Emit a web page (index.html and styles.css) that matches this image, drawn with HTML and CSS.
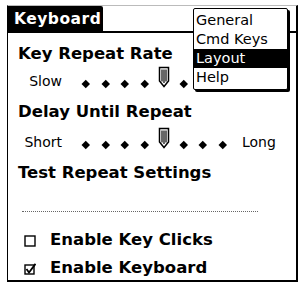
FILE: index.html
```html
<!DOCTYPE html>
<html>
<head>
<meta charset="utf-8">
<link rel="stylesheet" href="styles.css">
</head>
<body>
<div class="frame">
  <div class="titlebar">
    <div class="tab">Keyboard</div>
    <div class="rule"></div>
  </div>
  <div class="content">
    <div class="heading h1">Key Repeat Rate</div>
    <div class="slider s1">
      <span class="lbl">Slow</span>
      <div class="track">
        <span class="slot"><i class="dot"></i></span>
        <span class="slot"><i class="dot"></i></span>
        <span class="slot"><i class="dot"></i></span>
        <span class="slot"><i class="dot"></i></span>
        <span class="slot thumbslot"><svg class="thumb" width="12" height="22" viewBox="0 0 12 22"><path d="M1.5 1.5H10.5V15L6 20.5L1.5 15Z" fill="#fff" stroke="#000" stroke-width="1.5"/><path d="M4 3.5V15.5M6 3.5V17M8 3.5V15.5" stroke="#000" stroke-width="1.2"/></svg></span>
        <span class="slot"><i class="dot"></i></span>
        <span class="slot"><i class="dot"></i></span>
        <span class="slot"><i class="dot"></i></span>
      </div>
      <span class="lbl end">Fast</span>
    </div>
    <div class="heading h2">Delay Until Repeat</div>
    <div class="slider s2">
      <span class="lbl">Short</span>
      <div class="track">
        <span class="slot"><i class="dot"></i></span>
        <span class="slot"><i class="dot"></i></span>
        <span class="slot"><i class="dot"></i></span>
        <span class="slot"><i class="dot"></i></span>
        <span class="slot thumbslot"><svg class="thumb" width="12" height="22" viewBox="0 0 12 22"><path d="M1.5 1.5H10.5V15L6 20.5L1.5 15Z" fill="#fff" stroke="#000" stroke-width="1.5"/><path d="M4 3.5V15.5M6 3.5V17M8 3.5V15.5" stroke="#000" stroke-width="1.2"/></svg></span>
        <span class="slot"><i class="dot"></i></span>
        <span class="slot"><i class="dot"></i></span>
        <span class="slot"><i class="dot"></i></span>
      </div>
      <span class="lbl end">Long</span>
    </div>
    <div class="heading h3">Test Repeat Settings</div>
    <div class="dots"></div>
    <div class="check c1">
      <svg class="box" width="12" height="12" viewBox="0 0 12 12"><rect x="1" y="1" width="10" height="10" fill="none" stroke="#000" stroke-width="1.4"/></svg>
      <span>Enable Key Clicks</span>
    </div>
    <div class="check c2">
      <svg class="box" width="12" height="12" viewBox="0 0 12 12"><rect x="1" y="2" width="9" height="9" fill="none" stroke="#000" stroke-width="1.4"/><path d="M2.5 6L5 9.5L11.5 0.8" fill="none" stroke="#000" stroke-width="1.8"/></svg>
      <span>Enable Keyboard</span>
    </div>
  </div>
  <div class="menu">
    <div class="item">General</div>
    <div class="item">Cmd Keys</div>
    <div class="item sel">Layout</div>
    <div class="item">Help</div>
  </div>
</div>
</body>
</html>
```

FILE: styles.css
```css
html, body {
  margin: 0;
  padding: 0;
  background: #fff;
}
body {
  width: 301px;
  height: 284px;
  overflow: hidden;
  font-family: "DejaVu Sans", sans-serif;
  color: #000;
}
.frame {
  position: relative;
  margin: 5px 0 0 7px;
  width: 288px;
  height: 274px;
  border-left: 1px solid #000;
  border-right: 2px solid #000;
  border-bottom: 2px solid #000;
  border-top: 1px solid #bbb;
  box-sizing: content-box;
}
.titlebar {
  display: flex;
  align-items: flex-end;
  height: 27px;
}
.tab {
  background: #000;
  color: #fff;
  font-weight: bold;
  font-size: 15.5px;
  line-height: 26px;
  height: 27px;
  padding: 0 4px 0 6px;
  width: 85px;
  border-top-right-radius: 2px;
  letter-spacing: 0.5px;
  white-space: nowrap;
}
.rule {
  flex: 1;
  height: 2px;
  background: #000;
}
.content {
  padding-left: 10px;
}
.heading {
  font-weight: bold;
  font-size: 16.5px;
  line-height: 18px;
  height: 18px;
  white-space: nowrap;
}
.h1 { margin-top: 12px; }
.h2 { margin-top: 15px; }
.h3 { margin-top: 15px; }
.slider {
  display: flex;
  align-items: flex-end;
  height: 23px;
}
.s1 { margin-top: 2px; }
.s2 { margin-top: 5px; }
.lbl {
  width: 44px;
  text-align: right;
  font-size: 14px;
  line-height: 17px;
  margin-bottom: -2px;
  flex: none;
}
.lbl.end {
  text-align: left;
  margin-left: 10px;
}
.track {
  display: flex;
  margin-left: 14px;
  align-items: flex-end;
}
.slot {
  width: 19.5px;
  height: 22px;
  display: flex;
  justify-content: center;
  align-items: flex-end;
}
.dot {
  display: block;
  width: 5.5px;
  height: 5.5px;
  background: #000;
  transform: rotate(45deg);
  margin-bottom: 2px;
}
.thumb {
  display: block;
}
.dots {
  margin: 29px 0 0 4px;
  width: 236px;
  height: 0;
  border-top: 1px dotted #666;
}
.check {
  display: flex;
  align-items: flex-end;
  height: 18px;
  font-weight: bold;
  font-size: 16.5px;
  line-height: 18px;
  white-space: nowrap;
}
.check .box {
  margin: 0 14px 2px 6px;
  flex: none;
}
.c1 { margin-top: 19px; }
.c2 { margin-top: 10px; }
.menu {
  position: absolute;
  left: 185px;
  top: 2px;
  width: 93px;
  height: 78px;
  background: #fff;
  border: 1px solid #000;
  border-radius: 2px;
  box-shadow: 2px 2px 0 #000;
  padding-top: 2px;
  box-sizing: content-box;
}
.item {
  font-size: 14.5px;
  line-height: 19px;
  height: 19px;
  padding-left: 2px;
  white-space: nowrap;
}
.item.sel {
  background: #000;
  color: #fff;
}
```
